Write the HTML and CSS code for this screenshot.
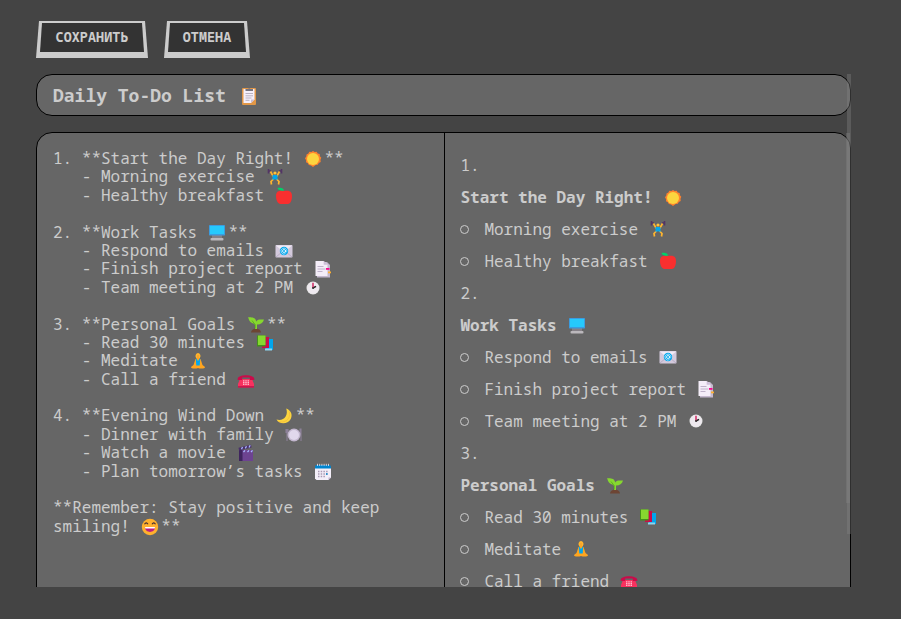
FILE: index.html
```html
<!DOCTYPE html>
<html lang="ru">
<head>
<meta charset="utf-8">
<title>Daily To-Do List</title>
<link rel="stylesheet" href="styles.css">
</head>
<body>
<svg class="sprite" aria-hidden="true">
<symbol id="clip" viewBox="0 0 18 18"><rect x="2" y="1" width="14" height="17" rx="1" fill="#e19747"/><path d="M3.500 2h11v10.500L11 16H3.500z" fill="#f5effa"/><path d="M11 16v-3.500h3.500z" fill="#c9bdd4"/><path d="M5.500 4V2h2.500a1.400 1.400 0 0 1 2.500 0H13v2z" fill="#777580"/><path d="M5.500 6.500h7.500M5.500 8.800h7.500M5.500 11h6M5.500 13.300h4" stroke="#aaa2b4" stroke-width=".8"/></symbol>
<symbol id="sun" viewBox="0 0 18 18"><path d="m9 .9 1.700 1.200 2-.4 1 1.800 2 .6.2 2.100 1.400 1.600-.8 2 .2 2.100-1.900 1-1 1.900-2.100.2L9 16.900 7 15.400l-2.200-.3-.9-1.800-1.900-1 .1-2.100L1 8.300l1.300-1.800.2-2.100 1.900-.8.9-1.900 2.100.3z" fill="#ff822d"/><circle cx="9" cy="8.900" r="6" fill="#fcd53f"/></symbol>
<symbol id="lift" viewBox="0 0 18 18"><path d="M2 3h3M13 3h3M2.500 1v4.500M15.500 1v4.500" stroke="#533566" stroke-width="1.600"/><path d="M4.500 3.500 7 8h4l2.500-4.500M7.500 11l-2.500 2.500.5 3M10.500 11l2.500 2.500-.5 3" fill="none" stroke="#ffb52e" stroke-width="1.700"/><circle cx="9" cy="5" r="1.600" fill="#ffc33b"/><path d="M6.500 7h5v5l-2.500-.8-2.500.8z" fill="#00a6ed"/></symbol>
<symbol id="apple" viewBox="0 0 18 18"><path d="M9 4C3 2.700 1 5 1 9c0 4 1.800 8 4.500 8H13c2.600 0 4-4 4-8 0-4-2-6.300-8-5z" fill="#f92f2f"/><path d="M9 3.800C5 4 3 2.800 2.500 1 6 .3 8.800 1 9 3.800z" fill="#00d26a"/></symbol>
<symbol id="pc" viewBox="0 0 18 18"><path d="M4 11h10v3H4z" fill="#858087"/><rect x="1" y="1" width="16" height="10.500" rx=".7" fill="#3b9ce0"/><path d="M2 2h14v8H2z" fill="#26c9fc"/><rect x="2.500" y="14" width="13" height="2.600" rx="1" fill="#bbb8bc"/></symbol>
<symbol id="mail" viewBox="0 0 18 18"><rect x=".5" y="3" width="17" height="12.500" rx=".7" fill="#d3c9dc"/><path d="m1 3.500 8 7 8-7z" fill="#f1eaf5"/><path d="m1 15 6-5M17 15l-6-5" stroke="#aea2ba" stroke-width=".7"/><circle cx="9" cy="9" r="4.200" fill="#00a6ed"/><circle cx="9" cy="9" r="1.500" fill="none" stroke="#fff" stroke-width=".8"/><path d="M10.500 8v2c1 1 1.700-1 1.200-2.200A3 3 0 1 0 10.500 11.700" fill="none" stroke="#fff" stroke-width=".6"/></symbol>
<symbol id="doc" viewBox="0 0 18 18"><path d="M3 2h10l3 3v12.500H3z" fill="#c5b9cf"/><path d="M1.500 1h8.200l3.800 3.800V16h-12z" fill="#f4edf8"/><path d="M9.700 1v3.800h3.800z" fill="#cdbfd8"/><path d="M3.500 6.500h6M3.500 9h8M3.500 11.500h5" stroke="#b9acc4" stroke-width=".9"/><path d="M12 8h3.500v1.800H12z" fill="#f70a8d"/><path d="M14 11.500h3v1.800h-3z" fill="#ffb02e"/></symbol>
<symbol id="clock" viewBox="0 0 18 18"><circle cx="9" cy="9" r="6.500" fill="#e6e6e6"/><circle cx="9" cy="9" r="5.700" fill="#eee9ef"/><path d="m9 9 3-1.600" stroke="#222" stroke-width="1.500"/><path d="M9 3.800V9" stroke="#ca0b4a" stroke-width="1.300"/><circle cx="9" cy="9" r="1" fill="#333"/></symbol>
<symbol id="plant" viewBox="0 0 18 18"><path d="M4 16.600a5 4.200 0 0 1 10 0z" fill="#6d4534"/><path d="M8 13V9.500C8 7 5 8 3 5.500 2 4.200 1.700 2.500 1 1.200c4-.2 7.500 0 8.200 4.300C10.500 3.200 13 3.400 17 3.500c-.8 3.500-4 5.200-7 5V13z" fill="#86d72f"/><path d="M8.200 12.500V8.700L5 4.500" fill="none" stroke="#44911b" stroke-width=".6"/></symbol>
<symbol id="books" viewBox="0 0 18 18"><path d="M10 5h7v11h-7z" fill="#00a6ed"/><path d="M9 14.500h7v2H9z" fill="#8dd4ef"/><path d="M6 3h7v11H6z" fill="#ca0b4a"/><path d="M1 1.500h8.500V12.500H1z" fill="#44911b"/><path d="M2 1.500h7.500V11H2z" fill="#86d72f"/></symbol>
<symbol id="yoga" viewBox="0 0 18 18"><path d="M6.500 7 4.500 13 2 15c-.2 2 5 1.800 7 1 2 .8 7.200 1 7-1l-2.500-2-2-6z" fill="#ffa51f"/><path d="M6.800 7h4.400l-.5 6.500H7.300z" fill="#00a6ed"/><path d="M9 1a2.600 3 0 0 1 2 4.800L9 9 7 5.800A2.600 3 0 0 1 9 1z" fill="#ffb52e"/><path d="M9 3v5" stroke="#ed8820" stroke-width=".7"/></symbol>
<symbol id="phone" viewBox="0 0 18 18"><path d="M3 8h12l2 5v3.500H1V13z" fill="#f8315f"/><path d="M.7 8c0-5 16.600-5 16.600 0v1h-4.500V6.500H5.200V9H.7z" fill="#ca0b4a"/><path d="M1 15.300h16v1.200H1z" fill="#b70d48"/><path d="M6.800 9.200v5M9 9.200v5M11.200 9.200v5" stroke="#ffe6ed" stroke-width="1.100" stroke-dasharray="1.200 .6"/></symbol>
<symbol id="moon" viewBox="0 0 18 18"><path d="M11.200 1.500c5.200 2 6.500 6.700 4.500 10.500-3 5.600-11.500 5.700-14.200.5 7.200 2 12.200-4 9.700-11z" fill="#fcd53f"/><path d="M14.300 4.500c2 8-5 12-11 10" fill="none" stroke="#f3b83b" stroke-width=".7"/></symbol>
<symbol id="plate" viewBox="0 0 18 18"><path d="M2 3v12M1 3v3.500h2V3M16 3v12M15 3h1v5h-1z" fill="none" stroke="#8c8098" stroke-width="1.100"/><circle cx="9" cy="9" r="6.500" fill="#c3b7cf"/><circle cx="9" cy="9" r="5" fill="#e1d8ec"/></symbol>
<symbol id="movie" viewBox="0 0 18 18"><path d="M2 6h14v11H2z" fill="#6d4391"/><path d="M2 6h3.500v11H2z" fill="#3f245e"/><path d="m1.500 3.800 12.500-3 .6 2.700-12.500 3z" fill="#49306b"/><path d="m4.500 5.300 1-2.300M8.300 4.400 9.500 2.200M12 3.500l1.200-2.300M6.500 8.200 8 6.400M10.500 8.200 12 6.400M14 8.200 15.500 6.400" stroke="#a8b7ff" stroke-width="1.300"/></symbol>
<symbol id="cal" viewBox="0 0 18 18"><path d="M1 5h16v9.500L14.500 17H2.500L1 15.500z" fill="#f3eef8"/><path d="M1 3.500 2 2h14l1 1.500V5.500H1z" fill="#0084ce"/><path d="M3.500 3V.8M5.700 3V.8M7.900 3V.8M10.100 3V.8M12.300 3V.8M14.500 3V.8" stroke="#dedbe8" stroke-width=".9"/><path d="M4 8.500h10M4 11h10M4 13.500h7.500" stroke="#a99ab3" stroke-width="1.500" stroke-dasharray="1.500 1.200"/><path d="M12 10.200h1.600v1.600H12z" fill="#0084ce"/><path d="M17 14.500 14.500 17v-2.500z" fill="#bfb2cf"/></symbol>
<symbol id="smile" viewBox="0 0 18 18"><circle cx="9" cy="9" r="8.200" fill="#ffb02e"/><path d="M3.500 6.300Q5.200 3.400 7 6.300M11 6.300q1.800-2.900 3.500 0" fill="none" stroke="#402a32" stroke-width="1.100"/><path d="M4 9h10c0 6.500-10 6.500-10 0z" fill="#bb1d80"/><path d="M4 9h10l-.3 1.500H4.300z" fill="#fff"/></symbol>
</svg>
<main class="page">
<div class="toolbar">
<button class="btn save"><span>Сохранить</span></button>
<button class="btn cancel"><span>Отмена</span></button>
</div>
<div class="editor">
<div class="title">Daily To-Do List <svg class="e"><use href="#clip"/></svg></div>
<div class="panes">
<div class="source">1. **Start the Day Right! <svg class="e"><use href="#sun"/></svg>**
   - Morning exercise <svg class="e"><use href="#lift"/></svg>
   - Healthy breakfast <svg class="e"><use href="#apple"/></svg>

2. **Work Tasks <svg class="e"><use href="#pc"/></svg>**
   - Respond to emails <svg class="e"><use href="#mail"/></svg>
   - Finish project report <svg class="e"><use href="#doc"/></svg>
   - Team meeting at 2 PM <svg class="e"><use href="#clock"/></svg>

3. **Personal Goals <svg class="e"><use href="#plant"/></svg>**
   - Read 30 minutes <svg class="e"><use href="#books"/></svg>
   - Meditate <svg class="e"><use href="#yoga"/></svg>
   - Call a friend <svg class="e"><use href="#phone"/></svg>

4. **Evening Wind Down <svg class="e"><use href="#moon"/></svg>**
   - Dinner with family <svg class="e"><use href="#plate"/></svg>
   - Watch a movie <svg class="e"><use href="#movie"/></svg>
   - Plan tomorrow’s tasks <svg class="e"><use href="#cal"/></svg>

**Remember: Stay positive and keep smiling! <svg class="e"><use href="#smile"/></svg>**</div>
<div class="preview">
<p>1.</p>
<p><strong>Start the Day Right! <svg class="e"><use href="#sun"/></svg></strong></p>
<ul><li>Morning exercise <svg class="e"><use href="#lift"/></svg></li><li>Healthy breakfast <svg class="e"><use href="#apple"/></svg></li></ul>
<p>2.</p>
<p><strong>Work Tasks <svg class="e"><use href="#pc"/></svg></strong></p>
<ul><li>Respond to emails <svg class="e"><use href="#mail"/></svg></li><li>Finish project report <svg class="e"><use href="#doc"/></svg></li><li>Team meeting at 2 PM <svg class="e"><use href="#clock"/></svg></li></ul>
<p>3.</p>
<p><strong>Personal Goals <svg class="e"><use href="#plant"/></svg></strong></p>
<ul><li>Read 30 minutes <svg class="e"><use href="#books"/></svg></li><li>Meditate <svg class="e"><use href="#yoga"/></svg></li><li>Call a friend <svg class="e"><use href="#phone"/></svg></li></ul>
</div>
</div>
<div class="track"></div>
<div class="thumb"></div>
</div>
</main>
</body>
</html>
```
FILE: styles.css
```css
* { box-sizing: border-box; }
body {
  margin: 0;
  height: 619px;
  overflow: hidden;
  background: #444;
  color: #ccc;
  font: 16px/18.385px "Noto Sans Mono", "Noto Mono", "DejaVu Sans Mono", monospace;
}
.sprite { display: none; }
.page { padding: 21px 50px 0 36px; }
.toolbar { display: flex; gap: 16px; height: 53px; }
.btn {
  position: relative;
  height: 37px;
  padding: 0 0 5px;
  border: 0;
  background: #ccc;
  color: #ccc;
  font: bold 13.33px/16px "Noto Sans Mono", "Noto Mono", "DejaVu Sans Mono", monospace;
  letter-spacing: .1px;
  text-transform: uppercase;
  clip-path: polygon(3px 0, calc(100% - 3px) 0, 100% 100%, 0 100%);
}
.btn::before {
  content: "";
  position: absolute;
  inset: 2px 4px 6px;
  background: #333;
  clip-path: polygon(2px 0, calc(100% - 2px) 0, 100% 100%, 0 100%);
}
.btn span { position: relative; }
.save { width: 112px; }
.cancel { width: 86px; }
.editor { position: relative; height: 513px; overflow: hidden; }
.title {
  height: 42px;
  padding: 0 16px;
  border: 1px solid #000;
  border-radius: 16px;
  background: #666;
  font-size: 18px;
  font-weight: bold;
  line-height: 41px;
}
.title .e { margin-left: 3.3px; vertical-align: 1px; }
.panes {
  display: grid;
  grid-template-columns: 408px 1fr;
  height: 600px;
  margin-top: 16px;
  border: 1px solid #000;
  border-radius: 16px;
  background: #666;
}
.source {
  padding: 16px;
  border-right: 1px solid #000;
  white-space: pre-wrap;
}
.preview { padding: 16px 15.5px; line-height: 32px; }
.preview p, .preview ul { margin: 0; padding: 0; }
.preview ul { list-style: none; }
.preview li { display: flex; align-items: center; white-space: pre; }
.preview li::before {
  content: "";
  width: 7px;
  height: 7px;
  margin: 1px 15.5px 0 -.6px;
  border: 1px solid #ccc;
  border-radius: 50%;
}
.e {
  width: 18px;
  height: 18px;
  margin: -4px 1.8px -4px 2.1px;
  vertical-align: 0;
}
.source .e { margin-left: 1.6px; margin-right: 2.3px; }
.preview .e { margin-left: 1.4px; }
.track, .thumb { position: absolute; background: rgba(136, 136, 136, .35); }
.track { top: 0; right: 0; width: 4px; height: 460px; }
.thumb { top: 59px; right: 1px; width: 4px; height: 370px; }
```
